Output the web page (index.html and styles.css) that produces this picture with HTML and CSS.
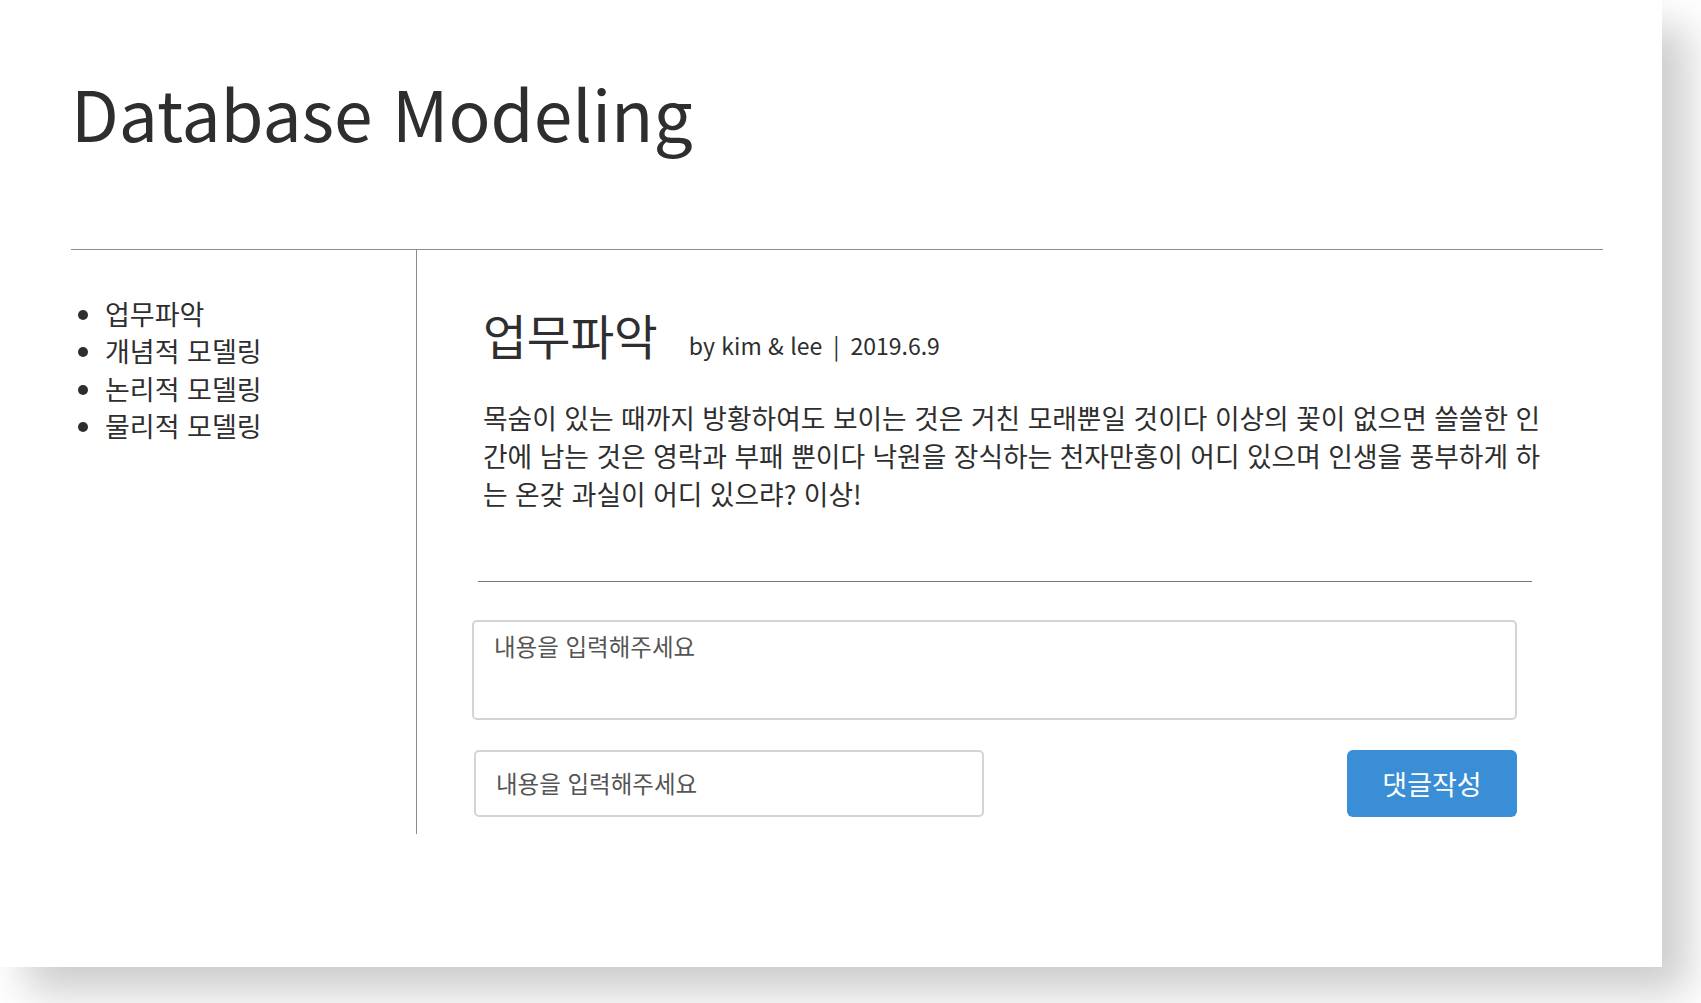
FILE: index.html
```html
<!DOCTYPE html>
<html lang="ko">
<head>
    <meta charset="UTF-8">
    <meta name="viewport" content="width=device-width, initial-scale=1.0">
    <title>Database Modeling</title>
    <link rel="stylesheet" href="styles.css">
</head>
<body>
    <div class="page">
        <header class="site-header">
            <h1>Database Modeling</h1>
        </header>

        <div class="layout">
            <nav class="side-nav">
                <ul>
                    <li>업무파악</li>
                    <li>개념적 모델링</li>
                    <li>논리적 모델링</li>
                    <li>물리적 모델링</li>
                </ul>
            </nav>

            <main class="article">
                <div class="article-head">
                    <h2>업무파악</h2>
                    <span class="meta">by kim &amp; lee<span class="sep">|</span>2019.6.9</span>
                </div>
                <p class="article-body">목숨이 있는 때까지 방황하여도 보이는 것은 거친 모래뿐일 것이다 이상의 꽃이 없으면 쓸쓸한 인간에 남는 것은 영락과 부패 뿐이다 낙원을 장식하는 천자만홍이 어디 있으며 인생을 풍부하게 하는 온갖 과실이 어디 있으랴? 이상!</p>

                <hr class="divider">

                <form class="comment-form">
                    <textarea class="comment-text" placeholder="내용을 입력해주세요"></textarea>
                    <div class="comment-row">
                        <input class="comment-name" type="text" placeholder="내용을 입력해주세요">
                        <button class="comment-submit" type="button">댓글작성</button>
                    </div>
                </form>
            </main>
        </div>
    </div>
</body>
</html>
```

FILE: styles.css
```css
html, body {
    height: 100%;
}
body {
    font-family: "Noto Sans CJK KR", "Noto Sans", sans-serif;
    margin: 0;
    padding: 0;
    background-color: #fff;
    color: #2e2e2e;
}
.page {
    width: 1662px;
    height: 967px;
    background-color: #fff;
    box-shadow: 26px 26px 40px rgba(0, 0, 0, 0.2);
    box-sizing: border-box;
    padding-left: 71px;
}
.site-header {
    width: 1532px;
    height: 250px;
    box-sizing: border-box;
    padding-top: 70px;
    border-bottom: 1px solid #8c8c8c;
}
.site-header h1 {
    margin: 0;
    font-size: 69.5px;
    font-weight: 400;
    line-height: 1.2;
}
.layout {
    display: flex;
}
.side-nav {
    width: 345px;
}
.side-nav ul {
    margin: 45px 0 0;
    padding-left: 34px;
    font-size: 27px;
    line-height: 37.3px;
}
.article {
    width: 1150px;
    height: 584px;
    box-sizing: border-box;
    border-left: 1px solid #8c8c8c;
    padding-left: 55px;
}
.article-head {
    display: flex;
    align-items: baseline;
    margin: 54px 0 0 11px;
}
.article-head h2 {
    margin: 0;
    font-size: 47.5px;
    font-weight: 400;
    line-height: 1.3;
}
.meta {
    margin-left: 31px;
    font-size: 23px;
}
.meta .sep {
    margin: 0 11px;
}
.article-body {
    width: 1068px;
    margin: 33px 0 0 11px;
    font-size: 26.75px;
    line-height: 38px;
}
.divider {
    width: 1054px;
    margin: 68px 0 0 6px;
    border: none;
    border-top: 1px solid #777;
}
.comment-form {
    margin-top: 38px;
    width: 1045px;
}
.comment-text {
    display: block;
    width: 100%;
    height: 100px;
    box-sizing: border-box;
    padding: 7px 20px;
    border: 2px solid #d4d4d4;
    border-radius: 5px;
    font-family: inherit;
    font-size: 23.5px;
    resize: none;
}
.comment-row {
    display: flex;
    justify-content: space-between;
    margin-top: 30px;
}
.comment-name {
    width: 510px;
    height: 67px;
    margin-left: 2px;
    box-sizing: border-box;
    padding: 0 20px;
    border: 2px solid #d4d4d4;
    border-radius: 5px;
    font-family: inherit;
    font-size: 23.5px;
}
.comment-text::placeholder,
.comment-name::placeholder {
    color: #555;
}
.comment-submit {
    width: 170px;
    height: 67px;
    border: none;
    border-radius: 6px;
    background-color: #3a8ed6;
    color: #fff;
    font-family: inherit;
    font-size: 27px;
}
```
